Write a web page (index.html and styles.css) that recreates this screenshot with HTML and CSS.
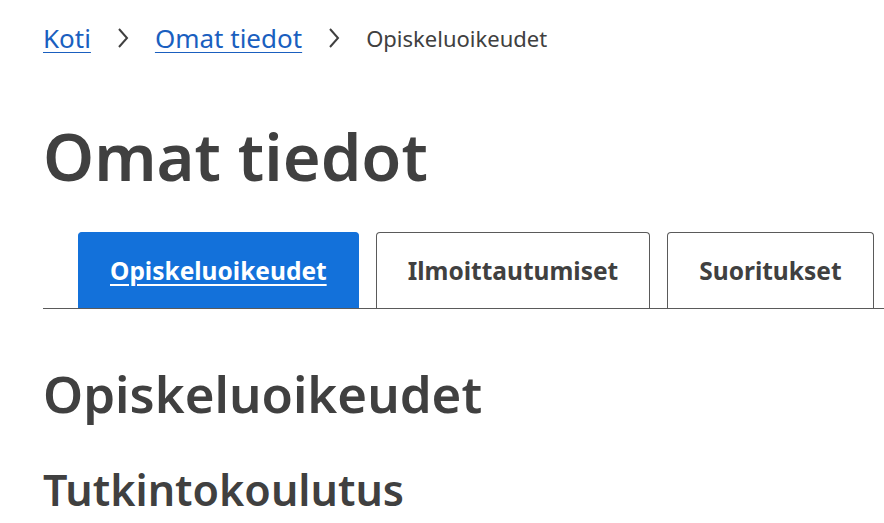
FILE: index.html
```html
<!DOCTYPE html>
<html lang="fi">
<head>
    <meta charset="utf-8">
    <title>Omat tiedot</title>
    <link rel="stylesheet" href="styles.css">
</head>
<body>
    <main class="page">
        <nav class="breadcrumb">
            <a href="#">Koti</a>
            <span class="sep"><svg width="14" height="22" viewBox="0 0 14 22"><path d="M3 2 L11 11 L3 20" fill="none" stroke="#404040" stroke-width="2"/></svg></span>
            <a href="#">Omat tiedot</a>
            <span class="sep"><svg width="14" height="22" viewBox="0 0 14 22"><path d="M3 2 L11 11 L3 20" fill="none" stroke="#404040" stroke-width="2"/></svg></span>
            <span class="current">Opiskeluoikeudet</span>
        </nav>

        <h1>Omat tiedot</h1>

        <!-- Välilehdet -->
        <div class="tabs">
            <a href="#" class="tab active">Opiskeluoikeudet</a>
            <a href="#" class="tab">Ilmoittautumiset</a>
            <a href="#" class="tab">Suoritukset</a>
        </div>

        <h2>Opiskeluoikeudet</h2>
        <h3>Tutkintokoulutus</h3>
    </main>
</body>
</html>
```

FILE: styles.css
```css
body {
    margin: 0;
    font-family: "Noto Sans", "Open Sans", sans-serif;
    color: #404040;
    background-color: #fff;
}

.page {
    padding: 20px 0 0 43px;
}

.breadcrumb {
    display: flex;
    align-items: center;
    height: 36px;
    font-size: 26px;
}

.breadcrumb a {
    color: #1a5fbf;
    text-decoration: underline;
    text-underline-offset: 4px;
    text-decoration-thickness: 1px;
}

.breadcrumb .sep {
    display: flex;
    margin: 0 25px;
}

.breadcrumb .current {
    font-size: 22px;
    color: #404040;
}

h1 {
    margin: 60px 0 0 0;
    font-size: 65px;
    font-weight: 600;
    line-height: 80px;
}

.tabs {
    display: flex;
    gap: 17px;
    margin-top: 36px;
    padding-left: 35px;
    border-bottom: 1px solid #5a5a5a;
}

.tab {
    display: flex;
    align-items: center;
    height: 76px;
    padding: 0 31px;
    box-sizing: border-box;
    border: 1px solid #5a5a5a;
    border-bottom: none;
    border-radius: 4px 4px 0 0;
    font-size: 24.5px;
    font-weight: 700;
    color: #404040;
    text-decoration: none;
}

.tab.active {
    background-color: #1371da;
    border-color: #1371da;
    color: #fff;
    text-decoration: underline;
    text-underline-offset: 4px;
}

h2 {
    margin: 54px 0 0 0;
    font-size: 51px;
    font-weight: 600;
    line-height: 60px;
}

h3 {
    margin: 40px 0 0 0;
    font-size: 43px;
    font-weight: 600;
    line-height: 54px;
}
```
